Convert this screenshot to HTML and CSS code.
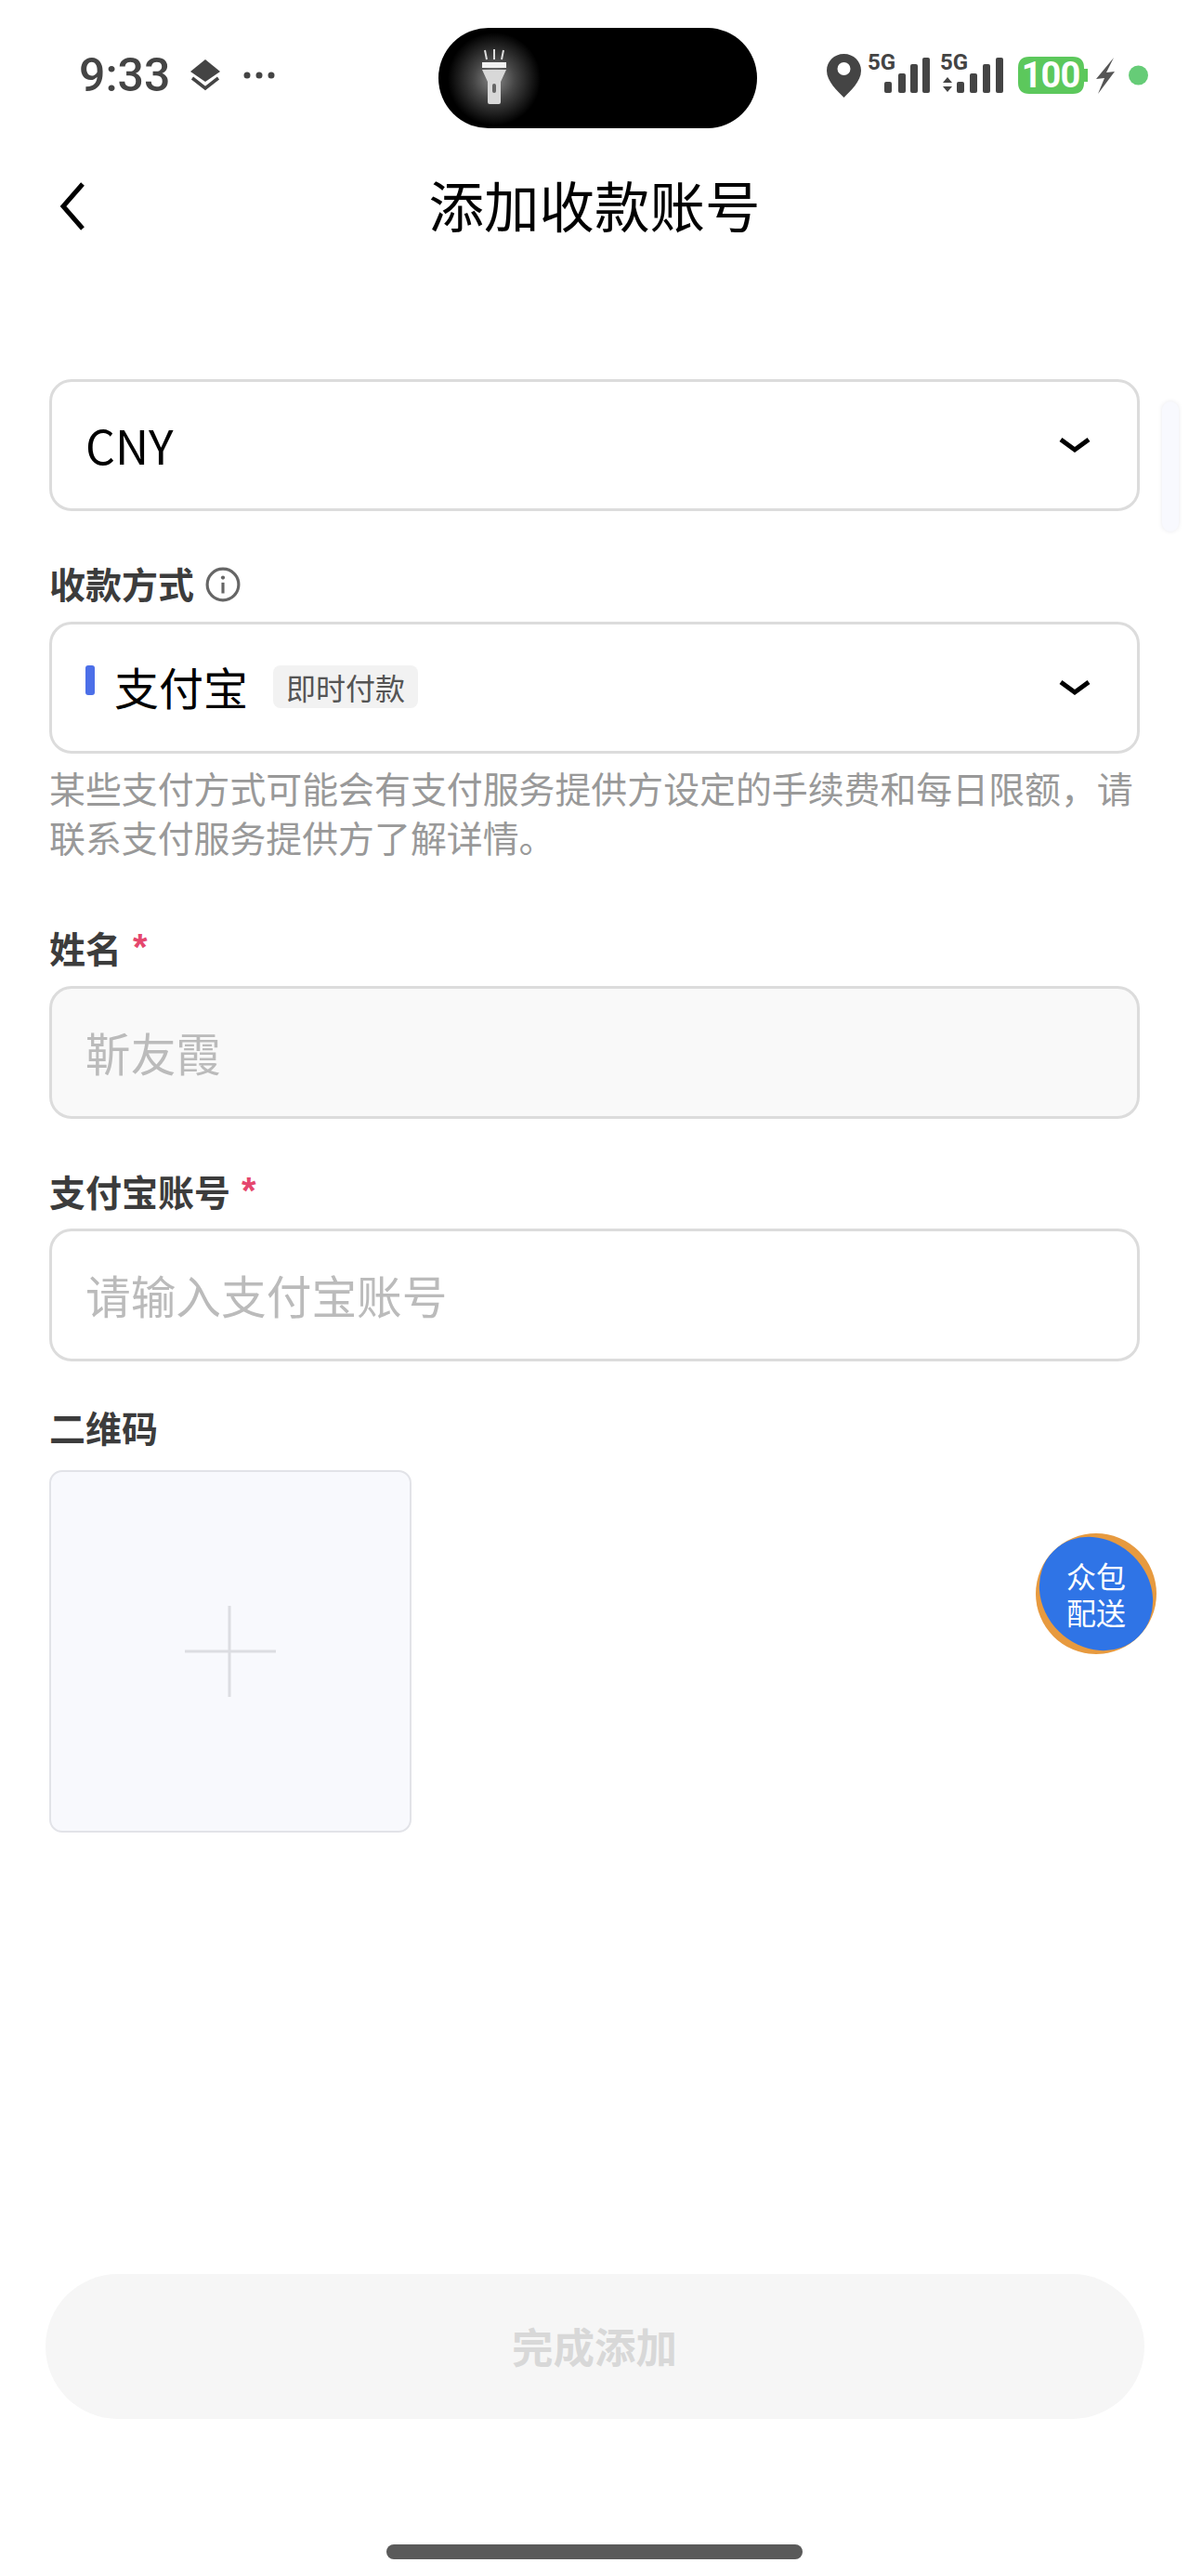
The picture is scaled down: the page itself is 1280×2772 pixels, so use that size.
FILE: index.html
```html
<!DOCTYPE html>
<html lang="zh-CN">
<head>
  <meta charset="UTF-8">
  <meta name="viewport" content="width=device-width, initial-scale=1.0">
  <title>添加收款账号</title>
  <link rel="stylesheet" href="styles.css">
</head>
<body>
  <div class="page">

    <!-- Status bar -->
    <div class="statusbar">
      <div class="status-left">
        <span class="time">9:33</span>
        <svg class="layers" width="32" height="34" viewBox="0 0 32 34">
          <path d="M16 0 L32 13 L16 24 L0 13 Z" fill="#444"/>
          <path d="M2 20 L16 31 L30 20" fill="none" stroke="#444" stroke-width="3.5"/>
        </svg>
        <svg class="more" width="34" height="10" viewBox="0 0 34 10">
          <circle cx="4" cy="5" r="3.5" fill="#444"/>
          <circle cx="17" cy="5" r="3.5" fill="#444"/>
          <circle cx="30" cy="5" r="3.5" fill="#444"/>
        </svg>
      </div>
      <div class="island">
        <svg class="torch" width="120" height="108" viewBox="0 0 120 108">
          <defs>
            <radialGradient id="glow">
              <stop offset="0" stop-color="#8a8a8a"/>
              <stop offset="0.45" stop-color="#444"/>
              <stop offset="1" stop-color="#000"/>
            </radialGradient>
          </defs>
          <circle cx="60" cy="55" r="50" fill="url(#glow)"/>
          <path d="M50 24 L52 34 M60 23 V34 M70 24 L68 34" stroke="#ddd" stroke-width="2"/>
          <rect x="47" y="37" width="26" height="6" fill="#f2f2f2"/>
          <path d="M47 45 H73 L67 58 V80 Q67 82 65 82 H55 Q53 82 53 80 V58 Z" fill="#d8d8d8"/>
          <rect x="58" y="60" width="4" height="10" rx="2" fill="#666"/>
        </svg>
      </div>
      <svg class="status-right" width="350" height="60" viewBox="0 -10 350 60">
        <text class="net" x="44" y="19">5G</text>
        <text class="net" x="122" y="19">5G</text>
        <g transform="translate(-890 -55)">
          <path d="M908.500 57 C898 57 890 65 890 75 C890 87 902 97 908.500 104 C915 97 927 87 927 75 C927 65 919 57 908.500 57 Z" fill="#444"/>
          <circle cx="908.500" cy="73" r="7" fill="#fff"/>
          <rect x="952" y="87" width="8" height="12" rx="2" fill="#444"/>
          <rect x="967" y="78" width="8" height="21" rx="2" fill="#444"/>
          <rect x="980" y="68" width="8" height="31" rx="2" fill="#444"/>
          <rect x="993" y="61" width="8" height="38" rx="2" fill="#444"/>
          <path d="M1015 88 L1020 82 L1025 88 Z M1015 92 L1020 98 L1025 92 Z" fill="#444"/>
          <rect x="1030" y="87" width="8" height="12" rx="2" fill="#444"/>
          <rect x="1044" y="78" width="8" height="21" rx="2" fill="#444"/>
          <rect x="1058" y="68" width="8" height="31" rx="2" fill="#444"/>
          <rect x="1072" y="61" width="8" height="38" rx="2" fill="#444"/>
          <path d="M1199 61 L1180 84 L1189 83 L1182 100 L1200 76 L1191 77 Z" fill="#555"/>
          <circle cx="1225.500" cy="80" r="10.500" fill="#66cc77"/>
          <path d="M1108 60 H1155 Q1167 60 1167 72 V73 H1171 V87 H1167 V88 Q1167 100 1155 100 H1108 Q1096 100 1096 88 V72 Q1096 60 1108 60 Z" fill="#5cc85c"/>
        </g>
        <text class="batt" x="241" y="38">100</text>
      </svg>
    </div>

    <!-- Title -->
    <div class="titlebar">
      <svg class="back" width="28" height="54" viewBox="0 0 28 54">
        <path d="M25 3 L4 27 L25 51" fill="none" stroke="#000" stroke-width="5"/>
      </svg>
      <h1>添加收款账号</h1>
    </div>

    <!-- Form -->
    <div class="form">
      <div class="field select first">
        <span class="value cny">CNY</span>
        <svg class="chevron" width="34" height="18" viewBox="0 0 34 18"><path d="M2 3 L17 14 L32 3" fill="none" stroke="#000" stroke-width="5"/></svg>
      </div>

      <div class="label label-method">
        <span>收款方式</span>
        <svg class="info" width="38" height="38" viewBox="0 0 36 36">
          <circle cx="18" cy="18" r="16" fill="none" stroke="#666" stroke-width="3"/>
          <circle cx="18" cy="11" r="2" fill="#666"/>
          <path d="M18 16 V27" stroke="#666" stroke-width="3"/>
        </svg>
      </div>
      <div class="field select">
        <span class="method-mark"></span>
        <span class="value method-name">支付宝</span>
        <span class="tag">即时付款</span>
        <svg class="chevron" width="34" height="18" viewBox="0 0 34 18"><path d="M2 3 L17 14 L32 3" fill="none" stroke="#000" stroke-width="5"/></svg>
      </div>
      <p class="help">某些支付方式可能会有支付服务提供方设定的手续费和每日限额，请联系支付服务提供方了解详情。</p>

      <div class="label label-name"><span>姓名</span><span class="required">*</span></div>
      <div class="field tall disabled"><span class="placeholder">靳友霞</span></div>

      <div class="label label-account"><span>支付宝账号</span><span class="required">*</span></div>
      <div class="field tall"><span class="placeholder">请输入支付宝账号</span></div>

      <div class="label label-qr"><span>二维码</span></div>
      <div class="upload">
        <svg width="98" height="98" viewBox="0 0 98 98"><path d="M0 49 H98 M48 0 V98" stroke="#dcdde2" stroke-width="3"/></svg>
      </div>
    </div>

    <!-- Bottom -->
    <div class="footer">
      <button class="submit"><span>完成添加</span></button>
      <div class="homebar"></div>
    </div>

    <div class="scroll-pill"></div>
    <div class="float-btn">
      <span class="float-face"></span>
      <div class="float-text">
        <div>众包</div>
        <div>配送</div>
      </div>
    </div>
  </div>
</body>
</html>
```

FILE: styles.css
```css
body {
  margin: 0;
  background: #fff;
  font-family: "Noto Sans CJK SC", "Noto Sans", sans-serif;
}
.page {
  position: relative;
  display: flex;
  flex-direction: column;
  width: 1280px;
  height: 2772px;
  overflow: hidden;
}

/* status bar */
.statusbar {
  display: grid;
  grid-template-columns: 387px 343px 1fr;
  align-items: center;
  height: 108px;
  margin-top: 30px;
  padding-left: 85px;
  box-sizing: border-box;
}
.status-left {
  display: flex;
  align-items: center;
  margin-bottom: 6px;
}
.time {
  font-family: Roboto, sans-serif;
  font-size: 50px;
  font-weight: 500;
  color: #444;
  line-height: 60px;
}
.layers {
  margin-left: 22px;
}
.more {
  margin-left: 25px;
}
.island {
  position: relative;
  height: 108px;
  background: #000;
  border-radius: 54px;
  overflow: hidden;
}
.torch {
  display: block;
}
.status-right {
  display: block;
  margin-left: 75px;
  margin-bottom: 16px;
}
.net {
  font-family: Roboto, sans-serif;
  font-size: 24px;
  font-weight: 700;
  fill: #444;
}
.batt {
  font-family: Roboto, sans-serif;
  font-size: 38px;
  font-weight: 700;
  fill: #fff;
  text-anchor: middle;
  letter-spacing: -1px;
}

/* title */
.titlebar {
  position: relative;
  display: flex;
  align-items: center;
  justify-content: center;
  height: 90px;
  margin-top: 36px;
}
.titlebar h1 {
  margin: 0;
  font-size: 59.500px;
  font-weight: 400;
  line-height: 90px;
  color: #000;
}
.back {
  position: absolute;
  left: 64px;
  top: 21px;
}

/* form */
.form {
  flex: 1;
  padding: 0 53px;
}
.field {
  position: relative;
  display: flex;
  align-items: center;
  box-sizing: border-box;
  height: 142px;
  padding: 0 36px;
  border: 3px solid #dcdcdc;
  border-radius: 24px;
  background: #fff;
}
.field.tall {
  height: 143px;
}
.field.first {
  margin-top: 144px;
}
.field.disabled {
  background: #f9f9f9;
}
.value {
  font-size: 48px;
  color: #000;
}
.cny {
  margin-top: -2px;
  font-size: 50px;
}
.method-name {
  margin-top: -5px;
}
.chevron {
  margin-left: auto;
  margin-right: 50px;
}
.select {
  padding-right: 0;
}
.method-mark {
  width: 10px;
  height: 32px;
  margin-right: 21px;
  margin-top: -16px;
  border-radius: 3px;
  background: #4c6fe8;
}
.tag {
  margin-left: 27px;
  margin-top: -2px;
  padding: 0 14px;
  font-size: 32px;
  line-height: 46px;
  color: #555;
  background: #f2f2f2;
  border-radius: 8px;
}
.placeholder {
  margin-top: -2px;
  font-size: 48.700px;
  color: #bbb;
}
.label {
  display: flex;
  align-items: center;
  box-sizing: border-box;
  height: 50px;
  margin-bottom: 15px;
  padding-bottom: 4px;
  font-size: 39px;
  font-weight: 700;
  color: #3c3c3c;
}
.label-method {
  margin-top: 54px;
}
.label-name {
  margin-top: 69px;
}
.label-account {
  margin-top: 54px;
  margin-bottom: 14px;
}
.label-qr {
  margin-top: 47px;
  margin-bottom: 20px;
}
.info {
  margin-left: 12px;
  margin-top: 4px;
}
.required {
  margin-left: 12px;
  font-family: "Liberation Sans", sans-serif;
  font-size: 40px;
  color: #e5476d;
}
.help {
  margin: 10px 0 0;
  font-size: 38.900px;
  line-height: 53px;
  color: #999;
}
.upload {
  display: flex;
  align-items: center;
  justify-content: center;
  box-sizing: border-box;
  width: 390px;
  height: 390px;
  background: #f8f9fd;
  border: 2px solid #e2e3e8;
  border-radius: 14px;
}

/* bottom */
.footer {
  display: flex;
  flex-direction: column;
  align-items: center;
  padding-bottom: 18px;
}
.submit {
  width: 1183px;
  height: 156px;
  padding: 0 0 4px;
  border: none;
  border-radius: 78px;
  background: #f6f6f6;
  color: #d8d8d8;
  font-family: inherit;
  font-size: 44.500px;
  font-weight: 700;
}
.homebar {
  width: 448px;
  height: 16px;
  margin-top: 135px;
  border-radius: 8px;
  background: #5a5a5a;
}

/* things over the form */
.scroll-pill {
  position: absolute;
  left: 1251px;
  top: 432px;
  width: 18px;
  height: 140px;
  border-radius: 9px;
  background: #f8f9fe;
  box-shadow: 0 0 5px #e8e8ec;
}
.float-btn {
  position: absolute;
  left: 1115px;
  top: 1650px;
  display: flex;
  align-items: center;
  justify-content: center;
  width: 130px;
  height: 130px;
  border-radius: 50%;
  background: #e79a3f;
  overflow: hidden;
}
.float-face {
  position: absolute;
  left: 0;
  top: 8px;
  width: 130px;
  height: 114px;
  border-radius: 50%;
  background: #2f74e6;
  transform: rotate(45deg);
}
.float-text {
  position: relative;
  font-size: 32px;
  font-weight: 400;
  line-height: 39px;
  color: #fff;
  text-align: center;
}
```
